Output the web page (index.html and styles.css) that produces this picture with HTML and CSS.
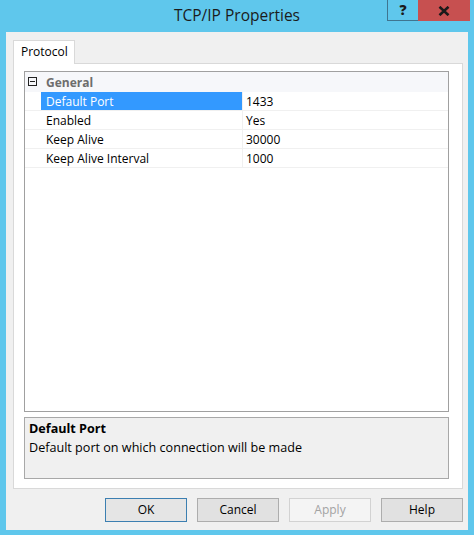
FILE: index.html
```html
<!DOCTYPE html>
<html>
<head>
<meta charset="utf-8">
<link rel="stylesheet" href="styles.css">
</head>
<body>
<div class="window">
  <div class="titlebar">
    <div class="title">TCP/IP Properties</div>
    <div class="caption-buttons">
      <div class="cap-help"><span class="help-glyph">?</span></div>
      <div class="cap-close">
        <svg width="12" height="10" viewBox="0 0 12 10"><path d="M1.5 0.8 L10.5 9.2 M10.5 0.8 L1.5 9.2" stroke="#1a1a1a" stroke-width="2.6" fill="none"/></svg>
      </div>
    </div>
  </div>
  <div class="client">
    <div class="tabs"><div class="tab">Protocol</div></div>
    <div class="tabpage">
      <div class="grid">
        <div class="cat">
          <span class="toggle-cell"><span class="toggle"></span></span>
          <span class="cat-name">General</span>
        </div>
        <div class="row selected"><div class="margin"></div><div class="name">Default Port</div><div class="value">1433</div></div>
        <div class="row"><div class="margin"></div><div class="name">Enabled</div><div class="value">Yes</div></div>
        <div class="row"><div class="margin"></div><div class="name">Keep Alive</div><div class="value">30000</div></div>
        <div class="row"><div class="margin"></div><div class="name">Keep Alive Interval</div><div class="value">1000</div></div>
      </div>
      <div class="desc">
        <div class="desc-title">Default Port</div>
        <div class="desc-text">Default port on which connection will be made</div>
      </div>
    </div>
    <div class="buttons">
      <div class="btn default">OK</div>
      <div class="btn">Cancel</div>
      <div class="btn disabled">Apply</div>
      <div class="btn">Help</div>
    </div>
  </div>
</div>
</body>
</html>
```
FILE: styles.css
```css
html, body {
  margin: 0;
  padding: 0;
}
body {
  font-family: "Open Sans", "Noto Sans", sans-serif;
  font-size: 12px;
  color: #000;
  background: #5fc7ec;
}
.window {
  width: 474px;
  height: 535px;
  background: #5fc7ec;
  display: flex;
  flex-direction: column;
  box-sizing: border-box;
}
.titlebar {
  height: 32px;
  position: relative;
  flex: none;
}
.title {
  text-align: center;
  font-size: 15.5px;
  line-height: 30px;
  color: #1b1b1b;
}
.caption-buttons {
  position: absolute;
  top: 0;
  right: 4px;
  display: flex;
}
.cap-help {
  width: 30px;
  height: 20px;
  border: 1px solid #3f7590;
  border-top: none;
  border-right: none;
  background: #5fc7ec;
  display: flex;
  align-items: center;
  justify-content: center;
}
.help-glyph {
  font-weight: 800;
  font-size: 14px;
  line-height: 16px;
  color: #1a1a1a;
}
.cap-close {
  width: 52px;
  height: 21px;
  background: #c75050;
  display: flex;
  align-items: center;
  justify-content: center;
}
.client {
  flex: 1;
  margin: 0 6px 5px 6px;
  background: #f0f0f0;
  padding: 8px 5px 8px 7px;
  display: flex;
  flex-direction: column;
}
.tabs {
  height: 23px;
  display: flex;
  flex: none;
}
.tab {
  border: 1px solid #d9d9d9;
  border-bottom: none;
  background: #fff;
  padding-left: 7px;
  line-height: 21px;
  position: relative;
  z-index: 1;
  margin-bottom: -1px;
  box-sizing: border-box;
  width: 62px;
  height: 24px;
  color: #000;
}
.tabpage {
  flex: 1;
  border: 1px solid #d9d9d9;
  background: #fff;
  padding: 7px 13px 9px 10px;
  display: flex;
  flex-direction: column;
}
.grid {
  height: 341px;
  box-sizing: border-box;
  border: 1px solid #a0a0a0;
  background: #fff;
  flex: none;
}
.cat {
  height: 20px;
  background: #f6f7fa;
  display: flex;
  align-items: center;
}
.toggle-cell {
  width: 16px;
  display: flex;
  align-items: center;
  padding-left: 3px;
  box-sizing: border-box;
  height: 20px;
}
.toggle {
  width: 9px;
  height: 9px;
  box-sizing: border-box;
  border: 1px solid #222;
  position: relative;
  margin-top: -1px;
}
.toggle::after {
  content: "";
  position: absolute;
  left: 1px;
  right: 1px;
  top: 3px;
  height: 1px;
  background: #222;
}
.cat-name {
  padding-left: 5px;
  font-weight: bold;
  color: #6d6d6d;
  line-height: 20px;
  padding-top: 2px;
}
.row {
  display: flex;
  height: 19px;
  box-sizing: border-box;
  border-bottom: 1px solid #f0f0f0;
  line-height: 19px;
}
.row .margin {
  width: 16px;
  flex: none;
}
.row .name {
  width: 202px;
  flex: none;
  padding-left: 5px;
  box-sizing: border-box;
  border-right: 1px solid #f0f0f0;
}
.row .value {
  padding-left: 3px;
}
.row.selected .name {
  background: #3399ff;
  color: #fff;
}
.desc {
  margin-top: 5px;
  flex: 1;
  border: 1px solid #a8a8a8;
  background: #f0f0f0;
  padding: 1px 4px;
  font-size: 12.6px;
}
.desc-title {
  font-weight: bold;
  line-height: 19px;
}
.desc-text {
  line-height: 20px;
}
.buttons {
  margin-top: 9px;
  height: 24px;
  display: flex;
  justify-content: flex-end;
  gap: 10px;
  flex: none;
}
.btn {
  width: 82px;
  height: 24px;
  box-sizing: border-box;
  border: 1px solid #adadad;
  background: #e1e1e1;
  text-align: center;
  line-height: 22px;
  color: #000;
}
.btn.default {
  border-color: #3c7fb1;
  background: #e5e5e5;
}
.btn.disabled {
  border-color: #d2d2d2;
  background: #f4f4f4;
  color: #a3a3a3;
}
```
